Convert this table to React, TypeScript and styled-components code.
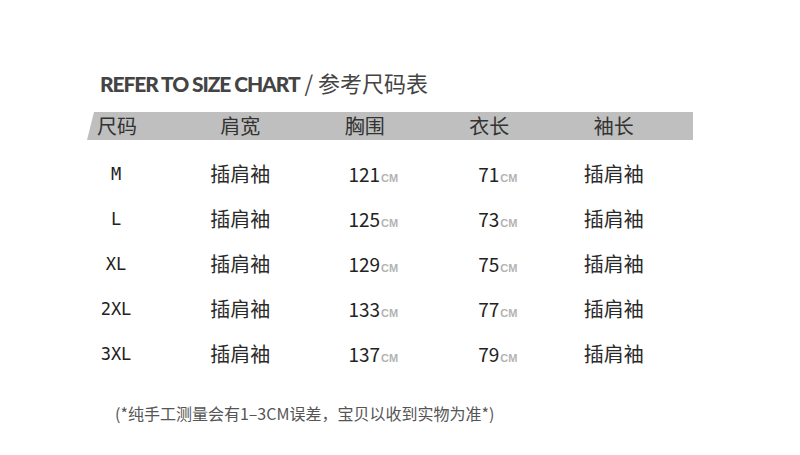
import styled, { createGlobalStyle } from "styled-components";

const GlobalStyle = createGlobalStyle`
  html, body {
    margin: 0;
    padding: 0;
    background: #fff;
  }
  body {
    font-family: "Noto Sans CJK SC", "Noto Sans", sans-serif;
    color: #333;
  }
`;

const rows = [
  { size: "M", chest: 121, length: 71 },
  { size: "L", chest: 125, length: 73 },
  { size: "XL", chest: 129, length: 75 },
  { size: "2XL", chest: 133, length: 77 },
  { size: "3XL", chest: 137, length: 79 },
];

const heads = ["尺码", "肩宽", "胸围", "衣长", "袖长"];

function Measure({ value }: { value: number }) {
  return (
    <NumCell>
      {value}
      <Unit>CM</Unit>
    </NumCell>
  );
}

export default function App() {
  return (
    <Page>
      <GlobalStyle />
      <Title>
        <TitleEn>REFER TO SIZE CHART</TitleEn>
        <TitleCn> / 参考尺码表</TitleCn>
      </Title>

      <HeadBar>
        {heads.map((h, i) => (
          <HeadCell key={h} first={i === 0}>
            {h}
          </HeadCell>
        ))}
      </HeadBar>

      <Body>
        {rows.map((r) => (
          <Row key={r.size}>
            <SizeCell>{r.size}</SizeCell>
            <TextCell>插肩袖</TextCell>
            <Measure value={r.chest} />
            <Measure value={r.length} />
            <TextCell>插肩袖</TextCell>
          </Row>
        ))}
      </Body>

      <Note>(*纯手工测量会有1–3CM误差，宝贝以收到实物为准*)</Note>
    </Page>
  );
}

const Page = styled.div`
  width: 800px;
  height: 455px;
  box-sizing: border-box;
  padding: 67px 0 0 87px;
  overflow: hidden;
`;

const Title = styled.div`
  margin-left: 13px;
  height: 30px;
  line-height: 30px;
  white-space: nowrap;
  color: #444;
`;

const TitleEn = styled.span`
  font-family: Lato, "Liberation Sans", sans-serif;
  font-weight: 900;
  font-size: 21px;
  letter-spacing: -1.1px;
`;

const TitleCn = styled.span`
  font-family: "Noto Sans CJK SC", sans-serif;
  font-size: 22px;
  color: #444;
`;

const cols = "91px repeat(4, 124.5px) 1fr";

const HeadBar = styled.div`
  margin-top: 15px;
  width: 606px;
  height: 28px;
  display: grid;
  grid-template-columns: ${cols};
  align-items: center;
  background: #bfbfbf;
  clip-path: polygon(7px 0, 100% 0, 100% 100%, 0 100%);
`;

const HeadCell = styled.div<{ first?: boolean }>`
  font-size: 20px;
  line-height: 28px;
  color: #333;
  text-align: ${(p) => (p.first ? "left" : "center")};
  padding-left: ${(p) => (p.first ? "10px" : "0")};
`;

const Body = styled.div`
  margin-top: 11px;
`;

const Row = styled.div`
  height: 45px;
  display: grid;
  grid-template-columns: ${cols};
  align-items: center;
`;

const SizeCell = styled.div`
  width: 58px;
  text-align: center;
  font-family: "DejaVu Sans Mono", monospace;
  font-size: 17px;
  color: #222;
`;

const TextCell = styled.div`
  text-align: center;
  font-size: 20px;
  color: #2a2a2a;
`;

const NumCell = styled.div`
  text-align: center;
  padding-left: 17px;
  font-size: 19px;
  color: #222;
  white-space: nowrap;
`;

const Unit = styled.span`
  margin-left: 1px;
  font-family: "Liberation Sans", Arial, sans-serif;
  font-weight: 700;
  font-size: 11px;
  color: #b3b3b3;
`;

const Note = styled.div`
  margin: 25px 0 0 28px;
  font-size: 16px;
  line-height: 24px;
  color: #555;
  white-space: nowrap;
`;
